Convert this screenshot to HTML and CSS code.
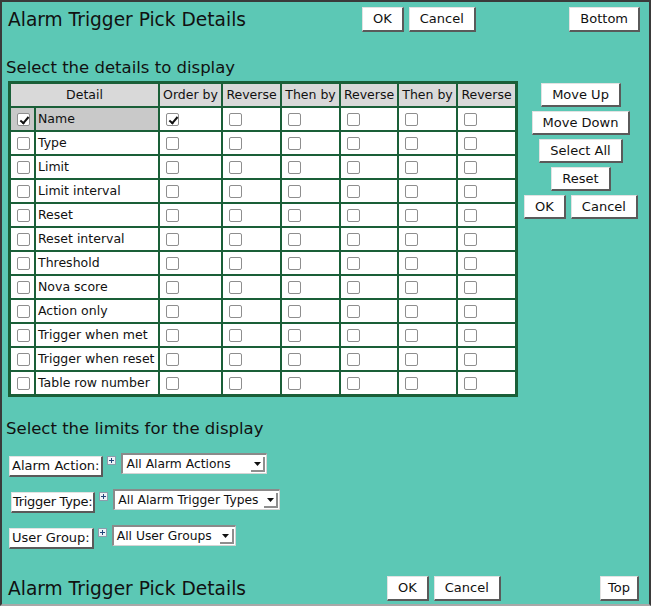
FILE: index.html
```html
<!DOCTYPE html>
<html lang="en">
<head>
<meta charset="utf-8">
<title>Alarm Trigger Pick Details</title>
<link rel="stylesheet" href="styles.css">
</head>
<body>
<div class="page">
  <div class="bar bar-top">
    <h1 class="bar-title">Alarm Trigger Pick Details</h1>
    <div class="bar-actions">
      <button class="btn bar-btn">OK</button>
      <button class="btn bar-btn">Cancel</button>
    </div>
    <button class="btn bar-btn bar-nav">Bottom</button>
  </div>

  <h2 class="section-title section-title-details">Select the details to display</h2>
  <div class="details">
    <table class="grid">
      <colgroup>
        <col class="c-check"><col class="c-detail"><col class="c-order"><col class="c-rev"><col class="c-then"><col class="c-rev2"><col class="c-then"><col class="c-rev">
      </colgroup>
      <thead>
        <tr><th colspan="2">Detail</th><th>Order by</th><th>Reverse</th><th>Then by</th><th>Reverse</th><th>Then by</th><th>Reverse</th></tr>
      </thead>
      <tbody>
        <tr class="is-selected"><td class="sel"><input type="checkbox" class="cb" checked></td><td class="sel name">Name</td><td><input type="checkbox" class="cb" checked></td><td><input type="checkbox" class="cb"></td><td><input type="checkbox" class="cb"></td><td><input type="checkbox" class="cb"></td><td><input type="checkbox" class="cb"></td><td><input type="checkbox" class="cb"></td></tr>
        <tr><td><input type="checkbox" class="cb"></td><td class="name">Type</td><td><input type="checkbox" class="cb"></td><td><input type="checkbox" class="cb"></td><td><input type="checkbox" class="cb"></td><td><input type="checkbox" class="cb"></td><td><input type="checkbox" class="cb"></td><td><input type="checkbox" class="cb"></td></tr>
        <tr><td><input type="checkbox" class="cb"></td><td class="name">Limit</td><td><input type="checkbox" class="cb"></td><td><input type="checkbox" class="cb"></td><td><input type="checkbox" class="cb"></td><td><input type="checkbox" class="cb"></td><td><input type="checkbox" class="cb"></td><td><input type="checkbox" class="cb"></td></tr>
        <tr><td><input type="checkbox" class="cb"></td><td class="name">Limit interval</td><td><input type="checkbox" class="cb"></td><td><input type="checkbox" class="cb"></td><td><input type="checkbox" class="cb"></td><td><input type="checkbox" class="cb"></td><td><input type="checkbox" class="cb"></td><td><input type="checkbox" class="cb"></td></tr>
        <tr><td><input type="checkbox" class="cb"></td><td class="name">Reset</td><td><input type="checkbox" class="cb"></td><td><input type="checkbox" class="cb"></td><td><input type="checkbox" class="cb"></td><td><input type="checkbox" class="cb"></td><td><input type="checkbox" class="cb"></td><td><input type="checkbox" class="cb"></td></tr>
        <tr><td><input type="checkbox" class="cb"></td><td class="name">Reset interval</td><td><input type="checkbox" class="cb"></td><td><input type="checkbox" class="cb"></td><td><input type="checkbox" class="cb"></td><td><input type="checkbox" class="cb"></td><td><input type="checkbox" class="cb"></td><td><input type="checkbox" class="cb"></td></tr>
        <tr><td><input type="checkbox" class="cb"></td><td class="name">Threshold</td><td><input type="checkbox" class="cb"></td><td><input type="checkbox" class="cb"></td><td><input type="checkbox" class="cb"></td><td><input type="checkbox" class="cb"></td><td><input type="checkbox" class="cb"></td><td><input type="checkbox" class="cb"></td></tr>
        <tr><td><input type="checkbox" class="cb"></td><td class="name">Nova score</td><td><input type="checkbox" class="cb"></td><td><input type="checkbox" class="cb"></td><td><input type="checkbox" class="cb"></td><td><input type="checkbox" class="cb"></td><td><input type="checkbox" class="cb"></td><td><input type="checkbox" class="cb"></td></tr>
        <tr><td><input type="checkbox" class="cb"></td><td class="name">Action only</td><td><input type="checkbox" class="cb"></td><td><input type="checkbox" class="cb"></td><td><input type="checkbox" class="cb"></td><td><input type="checkbox" class="cb"></td><td><input type="checkbox" class="cb"></td><td><input type="checkbox" class="cb"></td></tr>
        <tr><td><input type="checkbox" class="cb"></td><td class="name">Trigger when met</td><td><input type="checkbox" class="cb"></td><td><input type="checkbox" class="cb"></td><td><input type="checkbox" class="cb"></td><td><input type="checkbox" class="cb"></td><td><input type="checkbox" class="cb"></td><td><input type="checkbox" class="cb"></td></tr>
        <tr><td><input type="checkbox" class="cb"></td><td class="name">Trigger when reset</td><td><input type="checkbox" class="cb"></td><td><input type="checkbox" class="cb"></td><td><input type="checkbox" class="cb"></td><td><input type="checkbox" class="cb"></td><td><input type="checkbox" class="cb"></td><td><input type="checkbox" class="cb"></td></tr>
        <tr><td><input type="checkbox" class="cb"></td><td class="name">Table row number</td><td><input type="checkbox" class="cb"></td><td><input type="checkbox" class="cb"></td><td><input type="checkbox" class="cb"></td><td><input type="checkbox" class="cb"></td><td><input type="checkbox" class="cb"></td><td><input type="checkbox" class="cb"></td></tr>
      </tbody>
    </table>
    <div class="side-actions">
      <button class="btn">Move Up</button>
      <button class="btn">Move Down</button>
      <button class="btn">Select All</button>
      <button class="btn">Reset</button>
      <div class="side-pair">
        <button class="btn">OK</button>
        <button class="btn">Cancel</button>
      </div>
    </div>
  </div>

  <h2 class="section-title section-title-limits">Select the limits for the display</h2>
  <div class="limits">
    <div class="limit-row">
      <span class="limit-label">Alarm Action:</span>
      <svg class="limit-expand" width="9" height="9" viewBox="0 0 9 9"><rect x="0.5" y="0.5" width="8" height="8" fill="#eef2f6" stroke="#8c9cac"/><path d="M2 4.5h5M4.5 2v5" stroke="#24467a" stroke-width="1"/></svg>
      <div class="select select-action"><span class="select-value">All Alarm Actions</span><span class="select-arrow"><svg width="7" height="4" viewBox="0 0 7 4"><path d="M0 0h7L3.5 4z" fill="#111"/></svg></span></div>
    </div>
    <div class="limit-row">
      <span class="limit-label limit-label-tight">Trigger Type:</span>
      <svg class="limit-expand" width="9" height="9" viewBox="0 0 9 9"><rect x="0.5" y="0.5" width="8" height="8" fill="#eef2f6" stroke="#8c9cac"/><path d="M2 4.5h5M4.5 2v5" stroke="#24467a" stroke-width="1"/></svg>
      <div class="select select-type"><span class="select-value">All Alarm Trigger Types</span><span class="select-arrow"><svg width="7" height="4" viewBox="0 0 7 4"><path d="M0 0h7L3.5 4z" fill="#111"/></svg></span></div>
    </div>
    <div class="limit-row">
      <span class="limit-label">User Group:</span>
      <svg class="limit-expand" width="9" height="9" viewBox="0 0 9 9"><rect x="0.5" y="0.5" width="8" height="8" fill="#eef2f6" stroke="#8c9cac"/><path d="M2 4.5h5M4.5 2v5" stroke="#24467a" stroke-width="1"/></svg>
      <div class="select select-group"><span class="select-value">All User Groups</span><span class="select-arrow"><svg width="7" height="4" viewBox="0 0 7 4"><path d="M0 0h7L3.5 4z" fill="#111"/></svg></span></div>
    </div>
  </div>

  <div class="bar bar-bottom">
    <h1 class="bar-title">Alarm Trigger Pick Details</h1>
    <div class="bar-actions">
      <button class="btn bar-btn">OK</button>
      <button class="btn bar-btn">Cancel</button>
    </div>
    <button class="btn bar-btn bar-nav bar-nav-top">Top</button>
  </div>
</div>
</body>
</html>
```

FILE: styles.css
```css
html, body {
  margin: 0;
  padding: 0;
}

body {
  font-family: "DejaVu Sans", "Liberation Sans", sans-serif;
  font-size: 13px;
  color: #111;
  background: #5cc8b5;
}

.page {
  box-sizing: border-box;
  width: 651px;
  height: 606px;
  overflow: hidden;
  background: #5cc8b5;
  border: 2px solid #3a3a3a;
  border-bottom-color: #a8a8a8;
  padding: 5px 9px 0 4px;
}

/* Buttons */
.btn {
  font-family: inherit;
  font-size: 13px;
  color: #111;
  background: #fff;
  box-sizing: border-box;
  height: 24px;
  padding: 0 10px;
  margin: 0;
  border-style: solid;
  border-width: 1px 2px 2px 1px;
  border-color: #e2e2e2 #5a5a5a #5a5a5a #e2e2e2;
  border-radius: 0;
  line-height: 20px;
  cursor: pointer;
}

/* Top and bottom bars */
.bar {
  display: grid;
  grid-template-columns: 356px auto 1fr;
  align-items: center;
  height: 25px;
}

.bar-bottom {
  grid-template-columns: 381px auto 1fr;
  margin-top: 15px;
}

.bar-title {
  margin: 0 0 0 2px;
  font-size: 18.6px;
  font-weight: normal;
  line-height: 21px;
  white-space: nowrap;
}

.bar-btn {
  height: 25px;
}

.bar-actions {
  display: flex;
  gap: 5px;
}

.bar-nav {
  justify-self: end;
}

.bar-nav-top {
  padding: 0 7px;
  margin-right: 1px;
}

/* Section headings */
.section-title {
  margin: 0;
  font-size: 16.5px;
  font-weight: normal;
  line-height: 19px;
}

.section-title-details {
  margin: 26px 0 4px 0;
}

.section-title-limits {
  margin: 22px 0 15px 0;
}

/* Details grid */
.details {
  display: flex;
  align-items: flex-start;
  margin-left: 2px;
}

.grid {
  table-layout: fixed;
  width: 510px;
  border-collapse: separate;
  border-spacing: 0;
  border: 3px solid #1a5f38;
  background: #fff;
  font-size: 12.5px;
}

.c-check { width: 23px; }
.c-detail { width: 124px; }
.c-order { width: 63px; }
.c-rev { width: 59px; }
.c-then { width: 59px; }
.c-rev2 { width: 58px; }

.grid th,
.grid td {
  padding: 0 2px;
  height: 22px;
  line-height: 22px;
  white-space: nowrap;
  border-left: 2px solid #1a5f38;
  border-top: 2px solid #1a5f38;
  text-align: left;
  vertical-align: middle;
}

.grid th {
  border-top: 0;
  background: #d9d9d9;
  font-weight: normal;
  text-align: center;
}

.grid th:first-child,
.grid td:first-child {
  border-left: 0;
}

.grid .name {
  padding-left: 2px;
}

.grid .sel {
  background: #c9c9c9;
}

.cb {
  -webkit-appearance: none;
  appearance: none;
  position: relative;
  box-sizing: border-box;
  width: 13px;
  height: 13px;
  margin: 0 0 0 4px;
  border: 1px solid #8e8e8e;
  border-radius: 2px;
  background: #fff;
  vertical-align: middle;
}

.cb:checked::after {
  content: "";
  position: absolute;
  left: 3.5px;
  top: 0.5px;
  width: 3px;
  height: 7px;
  border: solid #111;
  border-width: 0 2px 2px 0;
  transform: rotate(40deg);
}

/* Side buttons */
.side-actions {
  width: 119px;
  margin-left: 4px;
  padding-top: 2px;
  display: flex;
  flex-direction: column;
  align-items: center;
  gap: 4px;
}

.side-pair {
  display: flex;
  gap: 5px;
}

/* Limits */
.limit-row {
  display: flex;
  align-items: flex-start;
  height: 36px;
  padding-left: 3px;
}

.limit-label {
  margin-top: 3px;
  box-sizing: border-box;
  height: 21px;
  padding: 0 2px;
  line-height: 18px;
  background: #fff;
  border-style: solid;
  border-width: 1px 2px 2px 1px;
  border-color: #e2e2e2 #5a5a5a #5a5a5a #e2e2e2;
  white-space: nowrap;
}

.limit-label-tight {
  margin-left: 2px;
  padding: 0 1px;
  letter-spacing: -0.3px;
}

.limit-expand {
  flex: none;
  margin: 3px 5px 0 4px;
}

.select {
  display: inline-flex;
  align-items: flex-end;
  box-sizing: border-box;
  height: 21px;
  padding: 0 1px 1px 3px;
  background: #fff;
  border-style: solid;
  border-width: 2px 1px 1px 2px;
  border-color: #8a8a8a #d4d4d4 #d4d4d4 #8a8a8a;
  white-space: nowrap;
  font-size: 12.3px;
}

.select-action { width: 146px; }
.select-type { width: 167px; }
.select-group { width: 124px; }

.select-value {
  align-self: center;
  margin-right: 3px;
  line-height: 16px;
}

.select-arrow {
  box-sizing: border-box;
  flex: none;
  width: 14px;
  height: 15px;
  margin-left: auto;
  display: flex;
  justify-content: center;
  padding-top: 5px;
  background: #fff;
  border-right: 2px solid #8e8e8e;
  border-bottom: 2px solid #8e8e8e;
}

.select-arrow svg {
  display: block;
}
```
